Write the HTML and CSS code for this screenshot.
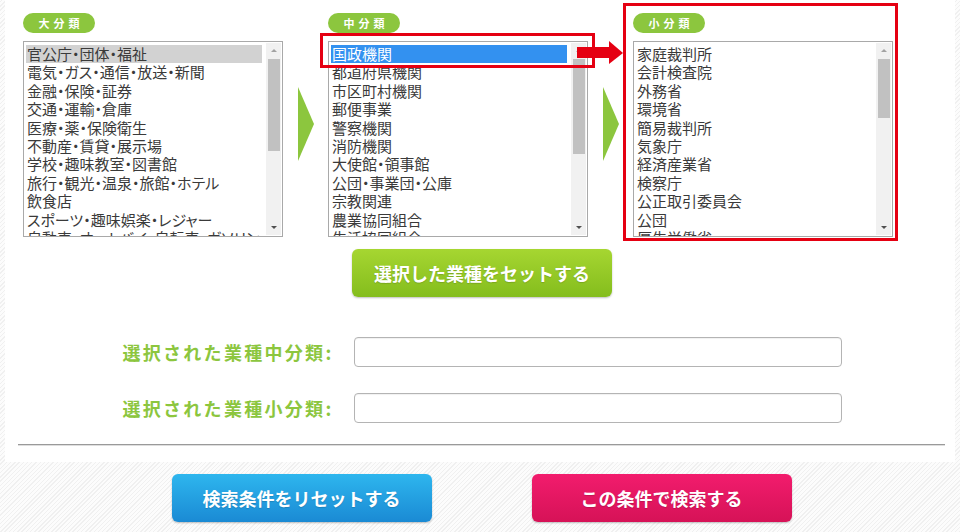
FILE: index.html
```html
<!DOCTYPE html>
<html lang="ja">
<head>
  <meta charset="UTF-8" />
  <meta name="viewport" content="width=device-width, initial-scale=1.0" />
  <title>業種選択</title>
  <link rel="stylesheet" href="styles.css">
</head>
<body>
  <div class="page">
    <div class="selectors">
      <div class="group">
        <span class="group-label">大分類</span>
        <div class="listbox">
          <ul class="items">
            <li class="picked">官公庁・団体・福祉</li>
            <li>電気・ガス・通信・放送・新聞</li>
            <li>金融・保険・証券</li>
            <li>交通・運輸・倉庫</li>
            <li>医療・薬・保険衛生</li>
            <li>不動産・賃貸・展示場</li>
            <li>学校・趣味教室・図書館</li>
            <li>旅行・観光・温泉・旅館・ホテル</li>
            <li>飲食店</li>
            <li>スポーツ・趣味娯楽・レジャー</li>
            <li>自動車・オートバイ・自転車・ガソリン</li>
          </ul>
          <div class="scrollbar">
            <span class="btn-up"></span>
            <span class="thumb thumb-a"></span>
            <span class="btn-down"></span>
          </div>
        </div>
      </div>

      <div class="next"><span class="triangle"></span></div>

      <div class="group">
        <span class="group-label">中分類</span>
        <div class="listbox">
          <ul class="items">
            <li class="active">国政機関</li>
            <li>都道府県機関</li>
            <li>市区町村機関</li>
            <li>郵便事業</li>
            <li>警察機関</li>
            <li>消防機関</li>
            <li>大使館・領事館</li>
            <li>公団・事業団・公庫</li>
            <li>宗教関連</li>
            <li>農業協同組合</li>
            <li>生活協同組合</li>
          </ul>
          <div class="scrollbar">
            <span class="btn-up"></span>
            <span class="thumb thumb-b"></span>
            <span class="btn-down"></span>
          </div>
        </div>
      </div>

      <div class="next"><span class="triangle"></span></div>

      <div class="group">
        <span class="group-label">小分類</span>
        <div class="listbox">
          <ul class="items">
            <li>家庭裁判所</li>
            <li>会計検査院</li>
            <li>外務省</li>
            <li>環境省</li>
            <li>簡易裁判所</li>
            <li>気象庁</li>
            <li>経済産業省</li>
            <li>検察庁</li>
            <li>公正取引委員会</li>
            <li>公団</li>
            <li>厚生労働省</li>
          </ul>
          <div class="scrollbar">
            <span class="btn-up"></span>
            <span class="thumb thumb-c"></span>
            <span class="btn-down"></span>
          </div>
        </div>
      </div>
    </div>

    <div class="set-row">
      <button class="btn btn-green">選択した業種をセットする</button>
    </div>

    <div class="field">
      <label class="field-label">選択された業種中分類:</label>
      <input type="text" class="field-input">
    </div>
    <div class="field">
      <label class="field-label">選択された業種小分類:</label>
      <input type="text" class="field-input">
    </div>

    <hr class="divider">
  </div>

  <div class="actions">
    <button class="btn btn-blue">検索条件をリセットする</button>
    <button class="btn btn-pink">この条件で検索する</button>
  </div>

  <!-- annotations drawn over the screenshot -->
  <div class="mark mark-item"></div>
  <div class="mark mark-list"></div>
  <svg class="mark-arrow" width="48" height="26" viewBox="0 0 48 26">
    <rect x="0" y="7" width="34" height="11" fill="#e50012"/>
    <polygon points="32,1 46,13 32,24" fill="#e50012"/>
  </svg>
</body>
</html>
```

FILE: styles.css
```css
body {
  margin: 0;
  padding: 0;
  position: relative;
  height: 532px;
  overflow: hidden;
  font-family: "Noto Sans CJK JP", "Noto Sans", sans-serif;
  background: repeating-linear-gradient(-45deg, #f0f0f0 0, #f0f0f0 1px, #fcfcfc 1px, #fcfcfc 3px);
}
.page {
  margin: 0 5px;
  background: #fff;
  padding-bottom: 16px;
}
.selectors {
  display: flex;
  padding: 13px 0 0 18px;
}
.group {
  width: 260px;
}
.group-label {
  display: block;
  width: 72px;
  height: 20px;
  line-height: 20px;
  border-radius: 10px;
  background: #8cc63e;
  color: #fff;
  font-size: 11px;
  font-weight: bold;
  letter-spacing: 4px;
  text-indent: 4px;
  text-align: center;
  margin-bottom: 8px;
}
.listbox {
  display: flex;
  box-sizing: border-box;
  height: 196px;
  border: 1px solid #a9a9a9;
  background: #fff;
}
.items {
  flex: 1;
  list-style: none;
  margin: 0;
  padding: 3px 4px 0 2px;
  overflow: hidden;
  font-size: 15px;
  line-height: 18.4px;
  color: #3a3a3a;
  white-space: nowrap;
  font-feature-settings: "palt";
}
.items li {
  padding-left: 1px;
}
.items .picked {
  background: #d2d2d2;
}
.items .active {
  background: #3391f0;
  color: #fff;
}
.scrollbar {
  width: 15px;
  margin: 1px 1px 1px 0;
  background: #f1f1f1;
  display: flex;
  flex-direction: column;
  align-items: center;
}
.btn-up, .btn-down {
  width: 0;
  height: 0;
  border-left: 3px solid transparent;
  border-right: 3px solid transparent;
}
.btn-up {
  margin: 6px 0 7px;
  border-bottom: 3px solid #a3a3a3;
}
.btn-down {
  margin: auto 0 6px;
  border-top: 3px solid #505050;
}
.thumb {
  width: 12px;
  background: #c1c1c1;
}
.thumb-a { height: 92px; }
.thumb-b { height: 95px; }
.thumb-c { height: 59px; }
.next {
  width: 45px;
  padding-top: 74px;
  display: flex;
  justify-content: center;
}
.triangle {
  width: 0;
  height: 0;
  border-left: 16px solid #8cc63e;
  border-top: 37px solid transparent;
  border-bottom: 37px solid transparent;
}
.set-row {
  display: flex;
  justify-content: center;
  margin-top: 12px;
  padding-left: 4px;
}
.btn {
  width: 260px;
  height: 48px;
  border: none;
  border-radius: 6px;
  color: #fff;
  font-family: "Noto Sans CJK JP", sans-serif;
  font-size: 18px;
  font-weight: bold;
  text-shadow: 0 1px 1px rgba(0,0,0,0.15);
  box-shadow: 0 1px 2px rgba(0,0,0,0.25);
  cursor: pointer;
}
.btn-green {
  background: linear-gradient(#a6d631, #84bd1d);
}
.btn-blue {
  background: linear-gradient(#2eb6ee, #1a8ad4);
}
.btn-pink {
  background: linear-gradient(#f21c6d, #d61257);
}
.field {
  display: flex;
  justify-content: center;
  align-items: center;
  gap: 20px;
  margin-top: 40px;
  padding-left: 4px;
}
.field + .field {
  margin-top: 26px;
}
.field-label {
  color: #8cc63e;
  font-size: 18px;
  font-weight: bold;
  letter-spacing: 2.3px;
}
.field-input {
  box-sizing: border-box;
  width: 488px;
  height: 30px;
  border: 1px solid #b4b4b4;
  border-radius: 4px;
  box-shadow: inset 0 1px 1px rgba(0,0,0,0.06);
}
.divider {
  margin: 21px 10px 0 13px;
  border: none;
  border-top: 1px solid #9a9a9a;
  border-bottom: 1px solid #dedede;
}
.actions {
  display: flex;
  justify-content: center;
  gap: 100px;
  padding: 12px 0 0 3px;
}
.mark {
  position: absolute;
  border: 3px solid #e50012;
  box-sizing: border-box;
}
.mark-item {
  left: 320px;
  top: 33px;
  width: 275px;
  height: 35px;
}
.mark-list {
  left: 623px;
  top: 3px;
  width: 275px;
  height: 238px;
}
.mark-arrow {
  position: absolute;
  left: 577px;
  top: 40px;
}
```
